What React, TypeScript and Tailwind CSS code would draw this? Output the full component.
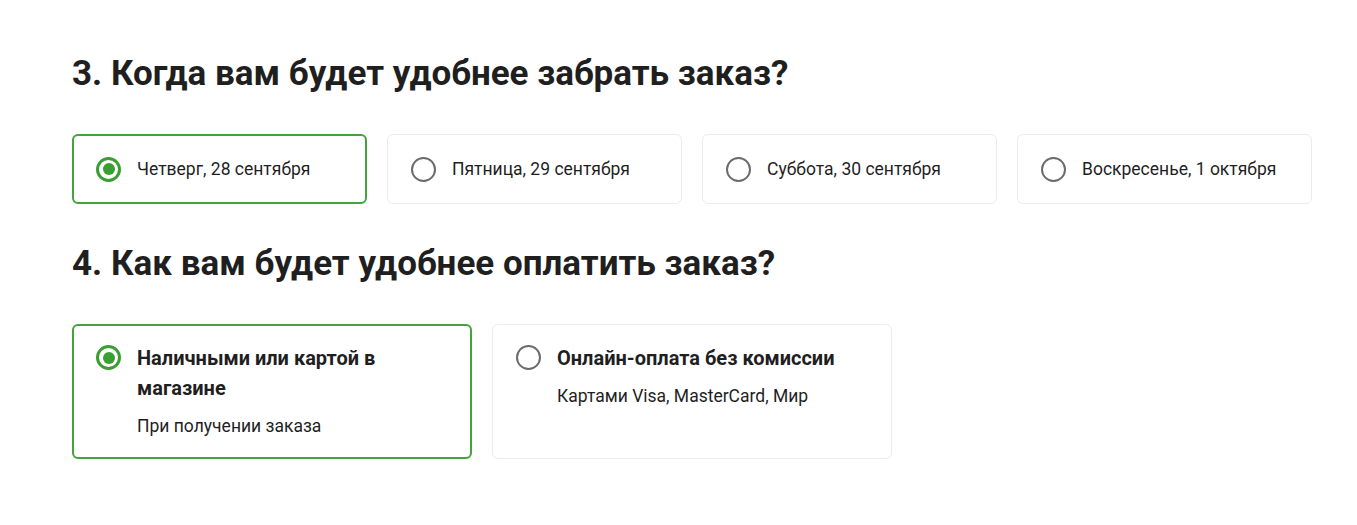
const dates = [
  { label: "Четверг, 28 сентября", checked: true },
  { label: "Пятница, 29 сентября", checked: false },
  { label: "Суббота, 30 сентября", checked: false },
  { label: "Воскресенье, 1 октября", checked: false },
];

const payments = [
  { title: "Наличными или картой в магазине", note: "При получении заказа", checked: true },
  { title: "Онлайн-оплата без комиссии", note: "Картами Visa, MasterCard, Мир", checked: false },
];

function Radio({ checked }: { checked: boolean }) {
  if (checked) {
    return (
      <span className="flex h-[25px] w-[25px] shrink-0 items-center justify-center rounded-full border-[3px] border-[#3a9e33]">
        <span className="h-[12px] w-[12px] rounded-full bg-[#3a9e33]" />
      </span>
    );
  }
  return <span className="block h-[25px] w-[25px] shrink-0 rounded-full border-2 border-[#6b6b6b]" />;
}

function cardClass(checked: boolean) {
  return checked
    ? "rounded-md border-2 border-[#44a33d] bg-white"
    : "rounded-md border border-[#ececec] bg-white";
}

export default function App() {
  return (
    <div className="min-h-[525px] bg-white px-[72px] pt-[53px] text-[#1f1f1f] [font-family:Roboto,'Noto_Sans',sans-serif]">
      <h2 className="text-[35px] font-bold leading-[42px]">3. Когда вам будет удобнее забрать заказ?</h2>

      <div className="mt-[39px] grid w-[1240px] grid-cols-4 gap-5">
        {dates.map((d) => (
          <label
            key={d.label}
            className={`flex h-[70px] items-center gap-[16px] ${d.checked ? "px-[22px]" : "px-[23px]"} ${cardClass(d.checked)}`}
          >
            <Radio checked={d.checked} />
            <span className="text-[17.5px] leading-[30px]">{d.label}</span>
          </label>
        ))}
      </div>

      <h2 className="mt-[39px] text-[35px] font-bold leading-[42px]">4. Как вам будет удобнее оплатить заказ?</h2>

      <div className="mt-[39px] flex gap-5">
        {payments.map((p) => (
          <label
            key={p.title}
            className={`flex h-[135px] w-[400px] items-start gap-[16px] ${p.checked ? "pl-[22px] pr-[18px] pt-[17px]" : "pl-[23px] pr-[19px] pt-[18px]"} ${cardClass(p.checked)}`}
          >
            <span className="mt-[2px] flex">
              <Radio checked={p.checked} />
            </span>
            <span className="flex flex-col">
              <span className="text-[20px] font-bold leading-[30px]">{p.title}</span>
              <span className="mt-[12px] text-[17.5px] leading-[22px]">{p.note}</span>
            </span>
          </label>
        ))}
      </div>
    </div>
  );
}
